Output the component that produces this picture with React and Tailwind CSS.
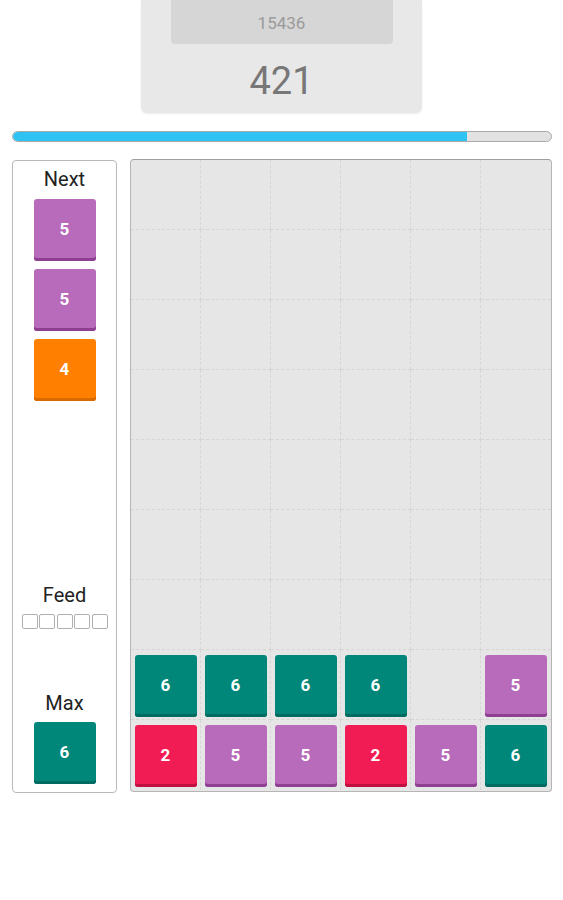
import React from "react";

const COLORS = {
  6: { bg: "bg-[#00877a]", sh: "shadow-[inset_0_-3px_0_#006b60]" },
  5: { bg: "bg-[#b86bba]", sh: "shadow-[inset_0_-3px_0_#8f3f92]" },
  4: { bg: "bg-[#ff7f00]", sh: "shadow-[inset_0_-3px_0_#d96a00]" },
  2: { bg: "bg-[#f21c55]", sh: "shadow-[inset_0_-3px_0_#c0103f]" },
};

function Tile({ v }) {
  const c = COLORS[v];
  return (
    <div
      className={`w-[62px] h-[62px] rounded-[3px] ${c.bg} ${c.sh} flex items-center justify-center text-white font-bold text-[17px] font-['Roboto',sans-serif]`}
    >
      {v}
    </div>
  );
}

const board = [
  [0, 0, 0, 0, 0, 0],
  [0, 0, 0, 0, 0, 0],
  [0, 0, 0, 0, 0, 0],
  [0, 0, 0, 0, 0, 0],
  [0, 0, 0, 0, 0, 0],
  [0, 0, 0, 0, 0, 0],
  [0, 0, 0, 0, 0, 0],
  [6, 6, 6, 6, 0, 5],
  [2, 5, 5, 2, 5, 6],
];

export default function App() {
  return (
    <div className="w-[563px] h-[900px] bg-white font-['Roboto',sans-serif] relative overflow-hidden">
      <div className="flex justify-center">
        <div className="w-[281px] h-[113px] bg-[#e8e8e8] rounded-b-[6px] shadow-[0_1px_2px_rgba(0,0,0,0.08)] flex flex-col items-center">
          <div className="w-[222px] h-[44px] bg-[#d6d6d6] rounded-b-[4px] flex items-center justify-center pt-[3px] text-[17px] text-[#9a9a9a]">
            15436
          </div>
          <div className="mt-[16px] text-[38px] leading-[42px] text-[#777777]">421</div>
        </div>
      </div>

      <div className="mx-[12px] mt-[18px] w-[540px] h-[11px] rounded-full border border-[#a9a9a9] bg-[#e2e2e2] overflow-hidden">
        <div className="h-full w-[454px] bg-[#2ec3f2] rounded-l-full" />
      </div>

      <div className="flex mt-[17px] ml-[12px] gap-[13px]">
        <div className="w-[105px] h-[633px] mt-[1px] border border-[#b9b9b9] rounded-[4px] bg-white flex flex-col items-center">
          <div className="mt-[6px] text-[20px] leading-[24px] text-[#222]">Next</div>
          <div className="mt-[8px] flex flex-col gap-[8px]">
            <Tile v={5} />
            <Tile v={5} />
            <Tile v={4} />
          </div>
          <div className="mt-[182px] text-[20px] leading-[24px] text-[#222]">Feed</div>
          <div className="mt-[7px] flex gap-[1.5px]">
            {[0, 1, 2, 3, 4].map((i) => (
              <div key={i} className="w-[16px] h-[15px] border border-[#b0b0b0] rounded-[2px]" />
            ))}
          </div>
          <div className="mt-[62px] text-[20px] leading-[24px] text-[#222]">Max</div>
          <div className="mt-[7px]">
            <Tile v={6} />
          </div>
        </div>

        <div className="w-[422px] h-[633px] border border-[#b5b5b5] border-t-[#9e9e9e] rounded-[4px] bg-[#e6e6e6] overflow-hidden">
          <div className="grid grid-cols-6 w-[420px]">
            {board.map((row, r) =>
              row.map((v, c) => (
                <div
                  key={`${r}-${c}`}
                  className={`w-[70px] h-[70px] pt-[4.5px] pl-[3.5px] border-dashed border-[#d6d6d6] ${c < 5 ? "border-r" : ""} ${r < 8 ? "border-b" : ""}`}
                >
                  {v ? <Tile v={v} /> : null}
                </div>
              ))
            )}
          </div>
        </div>
      </div>
    </div>
  );
}
